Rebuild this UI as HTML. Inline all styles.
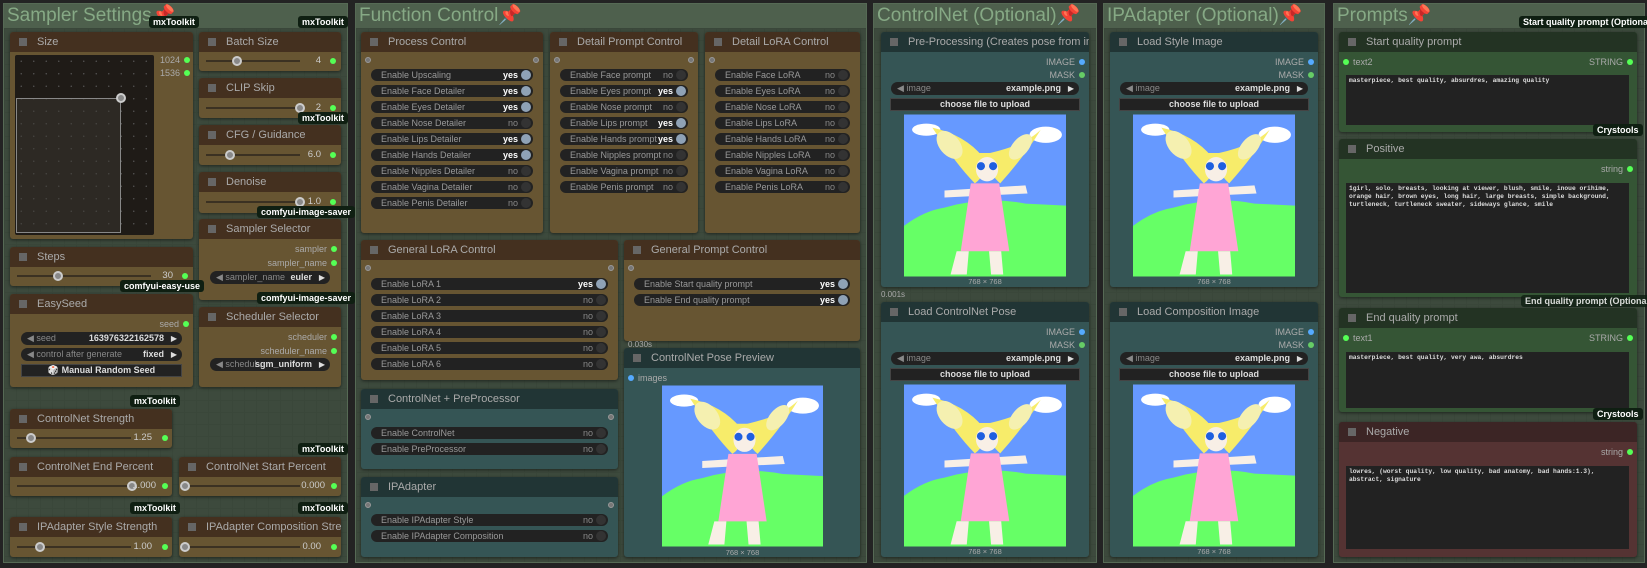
<!DOCTYPE html>
<html><head><meta charset="utf-8">
<style>
*{box-sizing:border-box;margin:0;padding:0}
body{width:1647px;height:568px;overflow:hidden;background:#232323;font-family:"Liberation Sans",sans-serif;position:relative}
.g{position:absolute;top:3px;height:560px;background:#3d4a3d;border:1px solid #566a55;
background-image:linear-gradient(#3a473a 1px,transparent 1px),linear-gradient(90deg,#3a473a 1px,transparent 1px);background-size:12px 12px}
.gh{height:24px;background:#4e604d;color:#86a985;font-size:19px;line-height:24px;padding-left:3px;white-space:nowrap}
.n{position:absolute;border-radius:3px;box-shadow:0 1px 3px rgba(0,0,0,.5);overflow:hidden}
.nt{height:20px;line-height:20px;font-size:11px;color:#aaa;padding-left:27px;position:relative;white-space:nowrap}
.nt:before{content:"";position:absolute;left:9px;top:6px;width:8px;height:8px;background:#666}
.br{background:#675532}.br .nt{background:#44301f}
.te{background:#355555}.te .nt{background:#213535}
.gr{background:#355535}.gr .nt{background:#233323}
.rd{background:#553333}.rd .nt{background:#3c2525}
.tg{position:absolute;left:10px;right:10px;height:12px;border-radius:6px;background:#222;color:#999;font-size:9px;line-height:12px;padding-left:10px;white-space:nowrap}
.tg i{position:absolute;right:2px;top:1px;width:10px;height:10px;border-radius:5px;background:#333}
.tg b{position:absolute;right:15px;top:0;font-weight:normal;color:#888}
.tg.y i{background:#8fa2b6}.tg.y b{color:#fff;font-weight:bold}
.io{position:absolute;width:6px;height:6px;border-radius:3px;top:5px;background:#777;border:1px solid #999}
.sl{position:absolute;height:2px;background:#3b3122;top:9px}
.kn{position:absolute;width:10px;height:10px;border-radius:5px;background:#888;border:2px solid #ccc;top:5px}
.v{position:absolute;color:#ccc;font-size:9.5px;top:4px;text-align:right}
.d{position:absolute;width:6px;height:6px;border-radius:3px;background:#5f5;top:7px}
.b{position:absolute;background:#0f1f12;color:#fff;font-size:9px;font-weight:bold;border-radius:3px;padding:0 4px;height:12px;line-height:12px;white-space:nowrap;z-index:5}
.ol{position:absolute;font-size:9px;color:#aaa;text-align:right}
.cb{position:absolute;height:13px;border-radius:7px;background:#222;font-size:9px;line-height:13px;color:#888;padding-left:6px;white-space:nowrap}
.cb b{position:absolute;right:18px;color:#ddd}
.cb:after{content:"▶";position:absolute;right:5px;color:#ddd;font-size:8px}
.btn{position:absolute;height:13px;background:#222;border:1px solid #444;color:#ddd;font-size:9px;line-height:11px;text-align:center;font-weight:bold}
.ta{position:absolute;background:#222;color:#ddd;font-family:"Liberation Mono",monospace;font-size:6.3px;line-height:8px;padding:2px 3px;font-weight:bold}
.img{position:absolute}
.cap{position:absolute;font-size:7.5px;color:#aaa;text-align:center}
</style></head><body>
<svg width="0" height="0" style="position:absolute"><defs><symbol id="pose" viewBox="0 0 160 160">
<rect width="160" height="160" fill="#6699ff"/>
<path d="M0 110 Q20 95 40 92 Q80 80 120 88 L160 90 L160 160 L0 160Z" fill="#66ff66"/>
<ellipse cx="22" cy="15" rx="14" ry="6" fill="#fff"/><ellipse cx="140" cy="20" rx="16" ry="8" fill="#fff"/>
<path d="M28 13 Q60 20 78 42 Q82 60 70 68 Q52 50 28 13Z" fill="#f7ec6a"/>
<path d="M135 15 Q120 30 85 38 Q80 55 95 68 Q120 40 135 15Z" fill="#f7ec6a"/>
<path d="M60 38 L100 38 L96 60 L64 60Z" fill="#f7ec6a"/>
<ellipse cx="45" cy="30" rx="10" ry="16" fill="#f5f0b0" transform="rotate(-40 45 30)"/>
<ellipse cx="115" cy="32" rx="8" ry="15" fill="#f5f0b0" transform="rotate(40 115 32)"/>
<ellipse cx="82" cy="54" rx="11" ry="12" fill="#f8efe6"/>
<circle cx="76" cy="51" r="4" fill="#1f5fe0"/><circle cx="88" cy="51" r="4" fill="#1f5fe0"/>
<path d="M40 75 L120 70 L122 78 L40 82Z" fill="#f8efe6"/>
<path d="M66 68 L94 68 L104 135 L56 135Z" fill="#ffa5d5"/>
<path d="M52 135 L64 135 L62 158 L46 158Z M84 135 L96 135 L98 158 L86 158Z" fill="#f8efe6"/>
</symbol></defs></svg>

<div class="g" style="left:3px;width:345px"><div class="gh">Sampler Settings📌</div></div>
<div class="g" style="left:355px;width:512px"><div class="gh">Function Control📌</div></div>
<div class="g" style="left:873px;width:224px"><div class="gh">ControlNet (Optional)📌</div></div>
<div class="g" style="left:1103px;width:222px"><div class="gh">IPAdapter (Optional)📌</div></div>
<div class="g" style="left:1333px;width:312px"><div class="gh">Prompts📌</div></div>

<div class="b" style="left:149px;top:16px">mxToolkit</div>
<div class="b" style="left:298px;top:16px">mxToolkit</div>

<div class="n br" style="left:10px;top:32px;width:183px;height:207px"><div class="nt">Size</div>
<div style="position:absolute;left:5px;top:23px;width:139px;height:180px;background:#1f1b17;border-radius:2px;background-image:radial-gradient(#555 0.6px,transparent 0.8px);background-size:12.5px 12.5px"></div>
<div style="position:absolute;left:6px;top:66px;width:105px;height:135px;border:1px solid #888;background:rgba(60,55,50,.5)"></div>
<div class="kn" style="left:106px;top:61px"></div>
<div class="ol" style="left:148px;top:23px;width:22px">1024</div><div class="d" style="left:174px;top:25px"></div>
<div class="ol" style="left:148px;top:36px;width:22px">1536</div><div class="d" style="left:174px;top:38px"></div>
</div>

<div class="n br" style="left:199px;top:32px;width:142px;height:39px"><div class="nt">Batch Size</div><div style="position:absolute;top:19px;left:0;right:0;height:20px"><div class="sl" style="left:7px;width:94px"></div><div class="kn" style="left:33px"></div><div class="v" style="right:20px">4</div><div class="d" style="right:5px"></div></div></div>
<div class="n br" style="left:199px;top:78px;width:142px;height:40px"><div class="nt">CLIP Skip</div><div style="position:absolute;top:20px;left:0;right:0;height:20px"><div class="sl" style="left:7px;width:94px"></div><div class="kn" style="left:96px"></div><div class="v" style="right:20px">2</div><div class="d" style="right:5px"></div></div></div>
<div class="b" style="left:298px;top:112px">mxToolkit</div>
<div class="n br" style="left:199px;top:125px;width:142px;height:40px"><div class="nt">CFG / Guidance</div><div style="position:absolute;top:20px;left:0;right:0;height:20px"><div class="sl" style="left:7px;width:94px"></div><div class="kn" style="left:26px"></div><div class="v" style="right:20px">6.0</div><div class="d" style="right:5px"></div></div></div>
<div class="n br" style="left:199px;top:172px;width:142px;height:41px"><div class="nt">Denoise</div><div style="position:absolute;top:20px;left:0;right:0;height:20px"><div class="sl" style="left:7px;width:94px"></div><div class="kn" style="left:96px"></div><div class="v" style="right:20px">1.0</div><div class="d" style="right:5px"></div></div></div>
<div class="b" style="left:257px;top:206px">comfyui-image-saver</div>
<div class="n br" style="left:199px;top:219px;width:142px;height:81px"><div class="nt">Sampler Selector</div>
<div class="ol" style="right:14px;top:25px">sampler</div><div class="d" style="right:4px;top:27px"></div>
<div class="ol" style="right:14px;top:39px">sampler_name</div><div class="d" style="right:4px;top:41px"></div>
<div class="cb" style="left:11px;width:120px;top:52px">◀ sampler_name<b>euler</b></div></div>
<div class="b" style="left:257px;top:292px">comfyui-image-saver</div>
<div class="n br" style="left:199px;top:307px;width:142px;height:80px"><div class="nt">Scheduler Selector</div>
<div class="ol" style="right:14px;top:25px">scheduler</div><div class="d" style="right:4px;top:27px"></div>
<div class="ol" style="right:14px;top:39px">scheduler_name</div><div class="d" style="right:4px;top:41px"></div>
<div class="cb" style="left:11px;width:120px;top:51px">◀ schedul... <b>sgm_uniform</b></div></div>

<div class="n br" style="left:10px;top:247px;width:183px;height:39px"><div class="nt">Steps</div><div style="position:absolute;top:19px;left:0;right:0;height:20px"><div class="sl" style="left:7px;width:134px"></div><div class="kn" style="left:43px"></div><div class="v" style="right:20px">30</div><div class="d" style="right:5px"></div></div></div>
<div class="b" style="left:120px;top:280px">comfyui-easy-use</div>
<div class="n br" style="left:10px;top:294px;width:183px;height:93px"><div class="nt">EasySeed</div>
<div class="ol" style="right:14px;top:25px">seed</div><div class="d" style="right:4px;top:27px"></div>
<div class="cb" style="left:11px;width:161px;top:38px">◀ seed<b>163976322162578</b></div>
<div class="cb" style="left:11px;width:161px;top:54px">◀ control after generate<b>fixed</b></div>
<div class="btn" style="left:11px;width:161px;top:70px">🎲 Manual Random Seed</div></div>

<div class="b" style="left:130px;top:395px">mxToolkit</div>
<div class="n br" style="left:10px;top:409px;width:162px;height:39px"><div class="nt">ControlNet Strength</div><div style="position:absolute;top:19px;left:0;right:0;height:20px"><div class="sl" style="left:7px;width:114px"></div><div class="kn" style="left:16px"></div><div class="v" style="right:20px">1.25</div><div class="d" style="right:4px"></div></div></div>
<div class="b" style="left:298px;top:443px">mxToolkit</div>
<div class="n br" style="left:10px;top:457px;width:162px;height:39px"><div class="nt">ControlNet End Percent</div><div style="position:absolute;top:19px;left:0;right:0;height:20px"><div class="sl" style="left:7px;width:114px"></div><div class="kn" style="left:117px"></div><div class="v" style="right:16px">1.000</div><div class="d" style="right:4px"></div></div></div>
<div class="n br" style="left:179px;top:457px;width:162px;height:39px"><div class="nt">ControlNet Start Percent</div><div style="position:absolute;top:19px;left:0;right:0;height:20px"><div class="sl" style="left:7px;width:114px"></div><div class="kn" style="left:1px"></div><div class="v" style="right:16px">0.000</div><div class="d" style="right:4px"></div></div></div>
<div class="b" style="left:130px;top:502px">mxToolkit</div>
<div class="b" style="left:298px;top:502px">mxToolkit</div>
<div class="n br" style="left:10px;top:517px;width:162px;height:40px"><div class="nt">IPAdapter Style Strength</div><div style="position:absolute;top:20px;left:0;right:0;height:20px"><div class="sl" style="left:7px;width:114px"></div><div class="kn" style="left:25px"></div><div class="v" style="right:20px">1.00</div><div class="d" style="right:4px"></div></div></div>
<div class="n br" style="left:179px;top:517px;width:162px;height:40px"><div class="nt">IPAdapter Composition Strength</div><div style="position:absolute;top:20px;left:0;right:0;height:20px"><div class="sl" style="left:7px;width:114px"></div><div class="kn" style="left:1px"></div><div class="v" style="right:20px">0.00</div><div class="d" style="right:4px"></div></div></div>

<div class="n br" style="left:361px;top:32px;width:182px;height:201px"><div class="nt">Process Control</div>
<div class="io" style="left:4px;top:25px"></div><div class="io" style="right:4px;top:25px"></div>
<div class="tg y" style="top:37px">Enable Upscaling<b>yes</b><i></i></div>
<div class="tg y" style="top:53px">Enable Face Detailer<b>yes</b><i></i></div>
<div class="tg y" style="top:69px">Enable Eyes Detailer<b>yes</b><i></i></div>
<div class="tg" style="top:85px">Enable Nose Detailer<b>no</b><i></i></div>
<div class="tg y" style="top:101px">Enable Lips Detailer<b>yes</b><i></i></div>
<div class="tg y" style="top:117px">Enable Hands Detailer<b>yes</b><i></i></div>
<div class="tg" style="top:133px">Enable Nipples Detailer<b>no</b><i></i></div>
<div class="tg" style="top:149px">Enable Vagina Detailer<b>no</b><i></i></div>
<div class="tg" style="top:165px">Enable Penis Detailer<b>no</b><i></i></div></div>

<div class="n br" style="left:550px;top:32px;width:148px;height:201px"><div class="nt">Detail Prompt Control</div>
<div class="io" style="left:4px;top:25px"></div><div class="io" style="right:4px;top:25px"></div>
<div class="tg" style="top:37px">Enable Face prompt<b>no</b><i></i></div>
<div class="tg y" style="top:53px">Enable Eyes prompt<b>yes</b><i></i></div>
<div class="tg" style="top:69px">Enable Nose prompt<b>no</b><i></i></div>
<div class="tg y" style="top:85px">Enable Lips prompt<b>yes</b><i></i></div>
<div class="tg y" style="top:101px">Enable Hands prompt<b>yes</b><i></i></div>
<div class="tg" style="top:117px">Enable Nipples prompt<b>no</b><i></i></div>
<div class="tg" style="top:133px">Enable Vagina prompt<b>no</b><i></i></div>
<div class="tg" style="top:149px">Enable Penis prompt<b>no</b><i></i></div></div>

<div class="n br" style="left:705px;top:32px;width:155px;height:201px"><div class="nt">Detail LoRA Control</div>
<div class="io" style="left:4px;top:25px"></div>
<div class="tg" style="top:37px">Enable Face LoRA<b>no</b><i></i></div>
<div class="tg" style="top:53px">Enable Eyes LoRA<b>no</b><i></i></div>
<div class="tg" style="top:69px">Enable Nose LoRA<b>no</b><i></i></div>
<div class="tg" style="top:85px">Enable Lips LoRA<b>no</b><i></i></div>
<div class="tg" style="top:101px">Enable Hands LoRA<b>no</b><i></i></div>
<div class="tg" style="top:117px">Enable Nipples LoRA<b>no</b><i></i></div>
<div class="tg" style="top:133px">Enable Vagina LoRA<b>no</b><i></i></div>
<div class="tg" style="top:149px">Enable Penis LoRA<b>no</b><i></i></div></div>

<div class="n br" style="left:361px;top:240px;width:257px;height:140px"><div class="nt">General LoRA Control</div>
<div class="io" style="left:4px;top:25px"></div><div class="io" style="right:4px;top:25px"></div>
<div class="tg y" style="top:38px">Enable LoRA 1<b>yes</b><i></i></div>
<div class="tg" style="top:54px">Enable LoRA 2<b>no</b><i></i></div>
<div class="tg" style="top:70px">Enable LoRA 3<b>no</b><i></i></div>
<div class="tg" style="top:86px">Enable LoRA 4<b>no</b><i></i></div>
<div class="tg" style="top:102px">Enable LoRA 5<b>no</b><i></i></div>
<div class="tg" style="top:118px">Enable LoRA 6<b>no</b><i></i></div></div>

<div class="n br" style="left:624px;top:240px;width:236px;height:101px"><div class="nt">General Prompt Control</div>
<div class="io" style="left:4px;top:25px"></div>
<div class="tg y" style="top:38px">Enable Start quality prompt<b>yes</b><i></i></div>
<div class="tg y" style="top:54px">Enable End quality prompt<b>yes</b><i></i></div></div>

<div class="n te" style="left:361px;top:389px;width:257px;height:80px"><div class="nt">ControlNet + PreProcessor</div>
<div class="io" style="left:4px;top:25px"></div><div class="io" style="right:4px;top:25px"></div>
<div class="tg" style="top:38px">Enable ControlNet<b>no</b><i></i></div>
<div class="tg" style="top:54px">Enable PreProcessor<b>no</b><i></i></div></div>

<div class="n te" style="left:361px;top:477px;width:257px;height:80px"><div class="nt">IPAdapter</div>
<div class="io" style="left:4px;top:25px"></div><div class="io" style="right:4px;top:25px"></div>
<div class="tg" style="top:37px">Enable IPAdapter Style<b>no</b><i></i></div>
<div class="tg" style="top:53px">Enable IPAdapter Composition<b>no</b><i></i></div></div>

<div style="position:absolute;left:628px;top:340px;font-size:8px;color:#aaa">0.030s</div>
<div class="n te" style="left:624px;top:348px;width:236px;height:209px"><div class="nt">ControlNet Pose Preview</div>
<div class="d" style="left:4px;top:27px;background:#5af"></div><div class="ol" style="left:14px;top:25px">images</div>
<svg class="img" style="left:38px;top:37px" width="161" height="162"><use href="#pose"/></svg>
<div class="cap" style="left:38px;width:161px;top:200px">768 × 768</div></div>

<div class="n te" style="left:881px;top:32px;width:208px;height:255px"><div class="nt">Pre-Processing (Creates pose from image)</div>
<div class="ol" style="right:14px;top:25px">IMAGE</div><div class="d" style="right:4px;top:27px;background:#5af"></div>
<div class="ol" style="right:14px;top:38px">MASK</div><div class="d" style="right:4px;top:40px;background:#6c6"></div>
<div class="cb" style="left:10px;width:188px;top:50px">◀ image<b>example.png</b></div>
<div class="btn" style="left:9px;width:190px;top:66px">choose file to upload</div>
<svg class="img" style="left:23px;top:82px" width="162" height="163"><use href="#pose"/></svg>
<div class="cap" style="left:23px;width:162px;top:245px">768 × 768</div></div>
<div style="position:absolute;left:881px;top:290px;font-size:8px;color:#aaa">0.001s</div>
<div class="n te" style="left:881px;top:302px;width:208px;height:255px"><div class="nt">Load ControlNet Pose</div>
<div class="ol" style="right:14px;top:25px">IMAGE</div><div class="d" style="right:4px;top:27px;background:#5af"></div>
<div class="ol" style="right:14px;top:38px">MASK</div><div class="d" style="right:4px;top:40px;background:#6c6"></div>
<div class="cb" style="left:10px;width:188px;top:50px">◀ image<b>example.png</b></div>
<div class="btn" style="left:9px;width:190px;top:66px">choose file to upload</div>
<svg class="img" style="left:23px;top:82px" width="162" height="163"><use href="#pose"/></svg>
<div class="cap" style="left:23px;width:162px;top:245px">768 × 768</div></div>

<div class="n te" style="left:1110px;top:32px;width:208px;height:255px"><div class="nt">Load Style Image</div>
<div class="ol" style="right:14px;top:25px">IMAGE</div><div class="d" style="right:4px;top:27px;background:#5af"></div>
<div class="ol" style="right:14px;top:38px">MASK</div><div class="d" style="right:4px;top:40px;background:#6c6"></div>
<div class="cb" style="left:10px;width:188px;top:50px">◀ image<b>example.png</b></div>
<div class="btn" style="left:9px;width:190px;top:66px">choose file to upload</div>
<svg class="img" style="left:23px;top:82px" width="162" height="163"><use href="#pose"/></svg>
<div class="cap" style="left:23px;width:162px;top:245px">768 × 768</div></div>
<div class="n te" style="left:1110px;top:302px;width:208px;height:255px"><div class="nt">Load Composition Image</div>
<div class="ol" style="right:14px;top:25px">IMAGE</div><div class="d" style="right:4px;top:27px;background:#5af"></div>
<div class="ol" style="right:14px;top:38px">MASK</div><div class="d" style="right:4px;top:40px;background:#6c6"></div>
<div class="cb" style="left:10px;width:188px;top:50px">◀ image<b>example.png</b></div>
<div class="btn" style="left:9px;width:190px;top:66px">choose file to upload</div>
<svg class="img" style="left:23px;top:82px" width="162" height="163"><use href="#pose"/></svg>
<div class="cap" style="left:23px;width:162px;top:245px">768 × 768</div></div>

<div class="b" style="left:1519px;top:16px">Start quality prompt (Optional)</div>
<div class="n gr" style="left:1339px;top:32px;width:298px;height:100px"><div class="nt">Start quality prompt</div>
<div class="d" style="left:4px;top:27px"></div><div class="ol" style="left:14px;top:25px">text2</div>
<div class="ol" style="right:14px;top:25px">STRING</div><div class="d" style="right:4px;top:27px"></div>
<div class="ta" style="left:7px;width:283px;top:43px;height:50px">masterpiece, best quality, absurdres, amazing quality</div></div>
<div class="b" style="left:1593px;top:124px">Crystools</div>
<div class="n gr" style="left:1339px;top:139px;width:298px;height:158px"><div class="nt">Positive</div>
<div class="ol" style="right:14px;top:25px">string</div><div class="d" style="right:4px;top:27px"></div>
<div class="ta" style="left:7px;width:283px;top:44px;height:110px">1girl, solo, breasts, looking at viewer, blush, smile, inoue orihime, orange hair, brown eyes, long hair, large breasts, simple background, turtleneck, turtleneck sweater, sideways glance, smile</div></div>
<div class="b" style="left:1521px;top:295px;opacity:.8">End quality prompt (Optional)</div>
<div class="n gr" style="left:1339px;top:308px;width:298px;height:104px"><div class="nt">End quality prompt</div>
<div class="d" style="left:4px;top:27px"></div><div class="ol" style="left:14px;top:25px">text1</div>
<div class="ol" style="right:14px;top:25px">STRING</div><div class="d" style="right:4px;top:27px"></div>
<div class="ta" style="left:7px;width:283px;top:44px;height:56px">masterpiece, best quality, very awa, absurdres</div></div>
<div class="b" style="left:1593px;top:408px">Crystools</div>
<div class="n rd" style="left:1339px;top:422px;width:298px;height:135px"><div class="nt">Negative</div>
<div class="ol" style="right:14px;top:25px">string</div><div class="d" style="right:4px;top:27px"></div>
<div class="ta" style="left:7px;width:283px;top:44px;height:83px">lowres, (worst quality, low quality, bad anatomy, bad hands:1.3), abstract, signature</div></div>
</body></html>
